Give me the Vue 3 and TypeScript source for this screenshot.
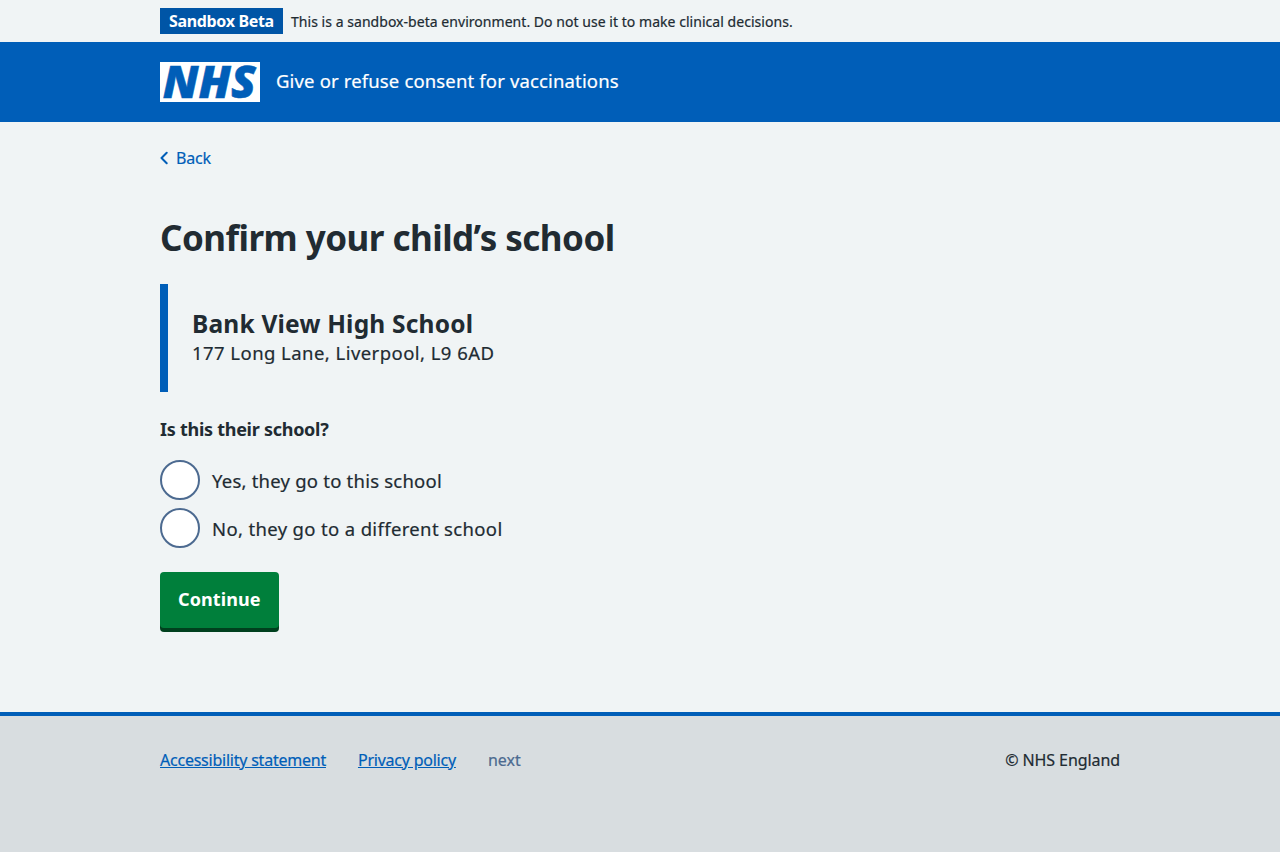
<script setup lang="ts">
import { ref } from 'vue'

interface Option {
  value: string
  label: string
}

const options: Option[] = [
  { value: 'yes', label: 'Yes, they go to this school' },
  { value: 'no', label: 'No, they go to a different school' },
]
const answer = ref<string>('')
</script>

<template>
  <div class="page">
    <div class="environment">
      <div class="container environment-row">
        <strong class="tag">Sandbox Beta</strong>
        <span class="notice">This is a sandbox-beta environment. Do not use it to make clinical decisions.</span>
      </div>
    </div>

    <header class="header">
      <div class="container header-row">
        <svg class="logo" viewBox="0 0 100 40" width="100" height="40" role="img" aria-label="NHS">
          <rect width="100" height="40" fill="#fff" />
          <text x="2.8" y="36" textLength="93" lengthAdjust="spacingAndGlyphs">NHS</text>
        </svg>
        <span class="service">Give or refuse consent for vaccinations</span>
      </div>
    </header>

    <div class="container body">
      <a class="back" href="#">
        <svg width="8" height="14" viewBox="0 0 8 14" aria-hidden="true">
          <path d="M6.7 1.8 1.5 7l5.2 5.2" fill="none" stroke="#005eb8" stroke-width="2" stroke-linecap="round" stroke-linejoin="round" />
        </svg>
        <span>Back</span>
      </a>

      <main>
        <h1>Confirm your child’s school</h1>
        <div class="inset">
          <h2>Bank View High School</h2>
          <p>177 Long Lane, Liverpool, L9 6AD</p>
        </div>
        <form @submit.prevent>
          <fieldset>
            <legend>Is this their school?</legend>
            <label v-for="o in options" :key="o.value" class="radio">
              <input v-model="answer" type="radio" name="school" :value="o.value" />
              <span :class="o.value">{{ o.label }}</span>
            </label>
          </fieldset>
          <button type="submit">Continue</button>
        </form>
      </main>
    </div>

    <footer class="footer">
      <div class="container footer-row">
        <a href="#">Accessibility statement</a>
        <a href="#">Privacy policy</a>
        <span class="release">next</span>
        <span class="copyright">© NHS England</span>
      </div>
    </footer>
  </div>
</template>

<style>
body {
  background: #d8dde0;
}
</style>

<style scoped>
.page {
  min-height: 852px;
  display: flex;
  flex-direction: column;
  background: #f0f4f5;
  color: #212b32;
  font-family: "Noto Sans", "Open Sans", sans-serif;
  font-size: 18.5px;
  white-space: nowrap;
}
.service,
.notice,
.radio span,
.back span,
.footer-row,
p {
  -webkit-text-stroke: 0.2px currentColor;
}
.container {
  width: 960px;
  margin: 0 auto;
}
.environment-row {
  display: flex;
  align-items: center;
  gap: 8px;
  height: 42px;
  font-size: 14px;
}
.notice {
  letter-spacing: 0.04px;
}
.tag {
  width: 123px;
  height: 26px;
  box-sizing: border-box;
  padding: 0 9px;
  background: #0055a6;
  color: #fff;
  font-size: 16px;
  line-height: 26px;
  letter-spacing: -0.34px;
}
.header {
  height: 80px;
  background: #005eb8;
  color: #fff;
}
.header-row {
  height: 80px;
  display: flex;
  align-items: center;
  gap: 16px;
}
.service {
  line-height: 26px;
  padding-bottom: 2px;
  letter-spacing: 0.15px;
}
.logo {
  display: block;
  overflow: visible;
}
.logo text {
  font-family: "Open Sans", "Noto Sans", sans-serif;
  font-size: 44.5px;
  font-weight: 800;
  font-style: italic;
  fill: #005eb8;
  stroke: #005eb8;
  stroke-width: 0.5px;
}
.body {
  height: 590px;
}
.back {
  display: flex;
  align-items: center;
  gap: 8px;
  width: max-content;
  height: 24px;
  padding-top: 24px;
  color: #005eb8;
  text-decoration: none;
  font-size: 16px;
  line-height: 24px;
  letter-spacing: -0.2px;
}
h1 {
  margin: 44px 0 0;
  font-size: 35px;
  line-height: 48px;
  letter-spacing: -0.53px;
}
.inset {
  margin-top: 22px;
  height: 108px;
  box-sizing: border-box;
  padding: 24px;
  border-left: 8px solid #005eb8;
}
h2 {
  margin: 0;
  font-size: 24.5px;
  line-height: 32px;
  letter-spacing: 0.2px;
}
p {
  margin: 0;
  line-height: 26px;
  letter-spacing: 0.45px;
}
fieldset {
  margin: 23px 0 0;
  padding: 0;
  border: 0;
}
legend {
  display: block;
  padding: 0;
  margin-bottom: 17px;
  font-size: 18px;
  font-weight: 700;
  line-height: 28px;
  letter-spacing: -0.27px;
}
.radio {
  display: flex;
  align-items: center;
  gap: 12px;
  height: 40px;
  margin-bottom: 8px;
}
.radio span {
  padding-top: 2px;
  line-height: 26px;
  letter-spacing: 0.22px;
}
.radio .no {
  letter-spacing: 0.35px;
}
.radio input {
  appearance: none;
  width: 40px;
  height: 40px;
  margin: 0;
  box-sizing: border-box;
  border: 2px solid #4c6a90;
  border-radius: 50%;
  background: #fff;
}
.radio input:checked {
  background: radial-gradient(#4c6a90 10px, #fff 11px);
}
button {
  display: block;
  width: 119px;
  height: 56px;
  margin: 16px 0 0;
  padding: 0 18px 2px;
  border: 0;
  border-radius: 4px;
  background: #007f3b;
  box-shadow: 0 4px 0 #00401e;
  color: #fff;
  font: 700 18px/54px "Noto Sans", "Open Sans", sans-serif;
  letter-spacing: 0.1px;
  text-align: left;
}
.footer {
  flex: 1;
  border-top: 4px solid #005eb8;
  background: #d8dde0;
  font-size: 16px;
}
.footer-row {
  display: flex;
  gap: 32px;
  padding-top: 32px;
  line-height: 24px;
}
.footer a {
  color: #005eb8;
  letter-spacing: -0.23px;
}
.release {
  color: #4c6a90;
  -webkit-text-stroke: 0.2px #4c6a90;
}
.copyright {
  margin-left: auto;
  letter-spacing: -0.08px;
}
</style>
